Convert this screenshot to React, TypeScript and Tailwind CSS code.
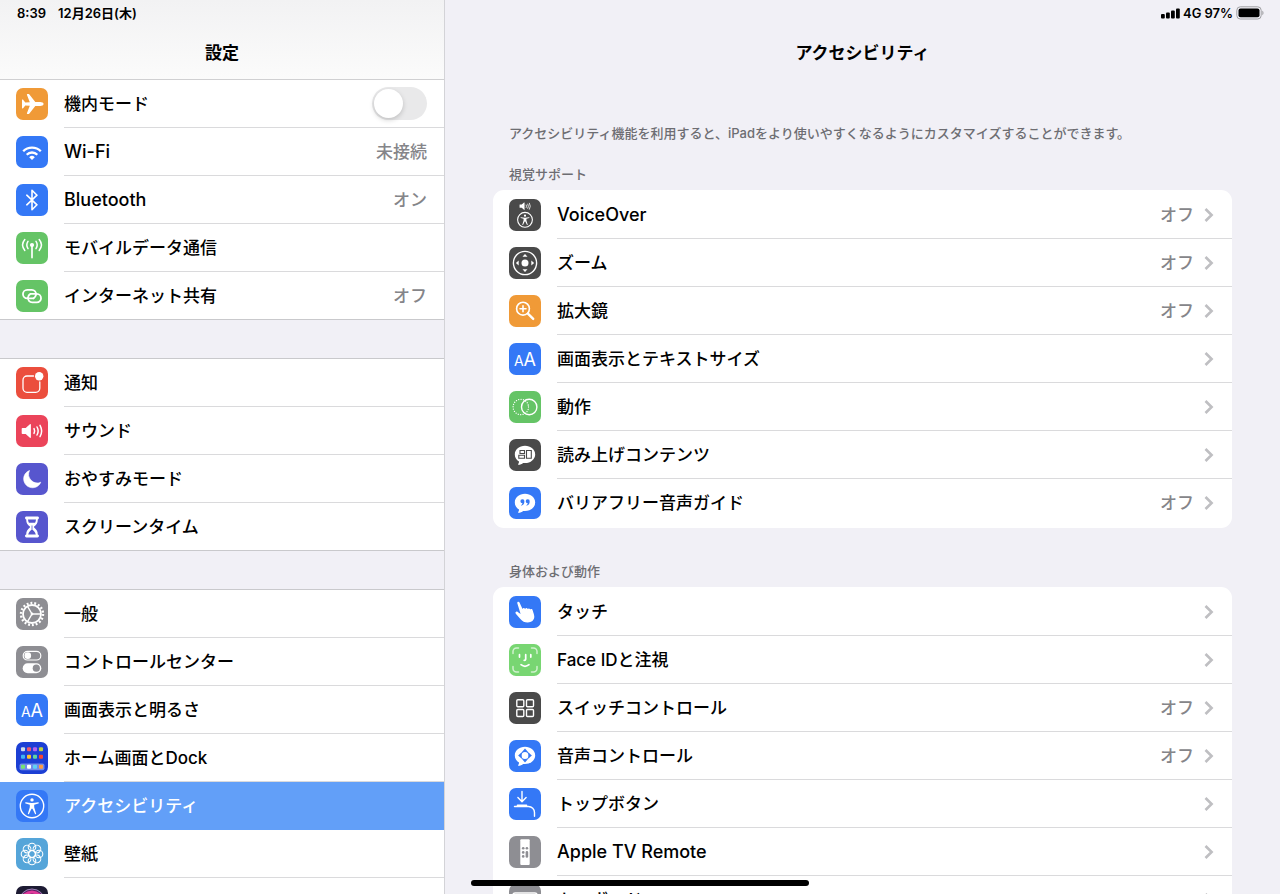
import React from 'react';
import clsx from 'clsx';

type IconName =
  | 'airplane' | 'wifi' | 'bluetooth' | 'antenna' | 'link'
  | 'notice' | 'sound' | 'moon' | 'hourglass'
  | 'gear' | 'controls' | 'textSize' | 'home' | 'person' | 'flower' | 'siri'
  | 'voiceOver' | 'zoom' | 'magnifier' | 'motion' | 'speech' | 'quote'
  | 'touch' | 'face' | 'grid' | 'voiceControl' | 'topButton' | 'remote' | 'keyboard';

interface Item {
  icon: IconName;
  bg: string;
  label: string;
  value?: string;
  toggle?: boolean;
  active?: boolean;
}

const ORANGE = 'bg-[#f09a37]';
const BLUE = 'bg-[#3478f6]';
const GREEN = 'bg-[#65c466]';
const INDIGO = 'bg-[#5756ce]';
const GRAY = 'bg-[#8e8e93]';
const DARK = 'bg-[#4a4a4a]';

const sidebarGroups: Item[][] = [
  [
    { icon: 'airplane', bg: ORANGE, label: '機内モード', toggle: true },
    { icon: 'wifi', bg: BLUE, label: 'Wi-Fi', value: '未接続' },
    { icon: 'bluetooth', bg: BLUE, label: 'Bluetooth', value: 'オン' },
    { icon: 'antenna', bg: GREEN, label: 'モバイルデータ通信' },
    { icon: 'link', bg: GREEN, label: 'インターネット共有', value: 'オフ' },
  ],
  [
    { icon: 'notice', bg: 'bg-[#eb4e3d]', label: '通知' },
    { icon: 'sound', bg: 'bg-[#eb445a]', label: 'サウンド' },
    { icon: 'moon', bg: INDIGO, label: 'おやすみモード' },
    { icon: 'hourglass', bg: INDIGO, label: 'スクリーンタイム' },
  ],
  [
    { icon: 'gear', bg: GRAY, label: '一般' },
    { icon: 'controls', bg: GRAY, label: 'コントロールセンター' },
    { icon: 'textSize', bg: BLUE, label: '画面表示と明るさ' },
    { icon: 'home', bg: 'bg-[#1c3fd4]', label: 'ホーム画面とDock' },
    { icon: 'person', bg: BLUE, label: 'アクセシビリティ', active: true },
    { icon: 'flower', bg: 'bg-[#55a5d9]', label: '壁紙' },
    { icon: 'siri', bg: 'bg-[#1d1b33]', label: 'Siri' },
  ],
];

const sections: { title: string; items: Item[] }[] = [
  {
    title: '視覚サポート',
    items: [
      { icon: 'voiceOver', bg: DARK, label: 'VoiceOver', value: 'オフ' },
      { icon: 'zoom', bg: DARK, label: 'ズーム', value: 'オフ' },
      { icon: 'magnifier', bg: ORANGE, label: '拡大鏡', value: 'オフ' },
      { icon: 'textSize', bg: BLUE, label: '画面表示とテキストサイズ' },
      { icon: 'motion', bg: GREEN, label: '動作' },
      { icon: 'speech', bg: DARK, label: '読み上げコンテンツ' },
      { icon: 'quote', bg: BLUE, label: 'バリアフリー音声ガイド', value: 'オフ' },
    ],
  },
  {
    title: '身体および動作',
    items: [
      { icon: 'touch', bg: BLUE, label: 'タッチ' },
      { icon: 'face', bg: 'bg-[#78d672]', label: 'Face IDと注視' },
      { icon: 'grid', bg: DARK, label: 'スイッチコントロール', value: 'オフ' },
      { icon: 'voiceControl', bg: BLUE, label: '音声コントロール', value: 'オフ' },
      { icon: 'topButton', bg: BLUE, label: 'トップボタン' },
      { icon: 'remote', bg: GRAY, label: 'Apple TV Remote' },
      { icon: 'keyboard', bg: GRAY, label: 'キーボード' },
    ],
  },
];

// Latin-only labels run a step larger to sit level with the kanji
const labelSize = (label: string) => (/^[\w\s-]+$/.test(label) ? 'text-[18px]' : 'text-[17px]');

const line = {
  fill: 'none',
  stroke: '#fff',
  strokeLinecap: 'round' as const,
  strokeLinejoin: 'round' as const,
};

const Bubble = () => (
  <path
    fill="#fff"
    d="M16 6.8c5.7 0 10.2 3.8 10.2 8.6S21.7 24 16 24c-.6 0-1.2 0-1.8-.1-1.3 1-3 1.900-4.700 1.900-.5 0-.6-.4-.3-.8.6-.7.9-1.600.8-2.500-2.500-1.500-4.200-4.100-4.200-7.100 0-4.800 4.500-8.600 10.200-8.600z"
  />
);

const Figure = () => (
  <g fill="#fff">
    <circle cx="16" cy="9.9" r="1.7" />
    <path d="M9.900 12.300c-.7-.2-1.100.9-.3 1.200l4.200 1.200v2.600l-1.900 6.100c-.2.900.9 1.200 1.200.4L15.500 18.800h1l2.400 5c.3.800 1.400.5 1.200-.4l-1.900-6.100v-2.600l4.200-1.200c.8-.3.400-1.400-.3-1.200-4.100 1-8.100 1-12.200 0z" />
  </g>
);

const Waves = () => (
  <g {...line} strokeWidth="1.5">
    <path d="M18 13.600q1.300 2.400 0 4.800" />
    <path d="M21 12q2.300 4 0 8" />
    <path d="M24 10.400q3.300 5.600 0 11.200" />
  </g>
);

const Speaker = () => (
  <path fill="#fff" d="M6.500 13h3.200l4.200-3.700c.4-.4 1-.1 1 .4v12.600c0 .5-.6.8-1 .4L9.700 19H6.500c-.5 0-.8-.3-.8-.8v-4.400c0-.5.3-.8.8-.8z" />
);

const glyphs: Record<IconName, React.ReactNode> = {
  airplane: (
    <path
      fill="#fff"
      d="M27.600 16c0-1.200-1.700-1.900-3.400-1.900h-4.900l-5.900-7.500c-.3-.4-.6-.5-1-.5h-1c-.4 0-.6.400-.5.700l2.900 7.400-4.500.2-2-2.500c-.2-.2-.3-.3-.6-.3h-.3c-.3 0-.4.300-.4.500v7.800c0 .2.100.5.400.5h.3c.3 0 .4-.1.600-.3l2-2.500 4.500.2-2.900 7.400c-.1.300.1.700.5.700h1c.4 0 .7-.1 1-.5l5.900-7.500h4.900c1.700 0 3.400-.7 3.400-1.900z"
    />
  ),
  wifi: (
    <g {...line} strokeWidth="2.3" strokeLinecap="butt">
      <path d="M7.200 15.200a12.400 12.400 0 0 1 17.600 0" />
      <path d="M10.700 18.700a7.500 7.500 0 0 1 10.600 0" />
      <path d="M13.200 21.200a4 4 0 0 1 5.600 0L16 24z" fill="#fff" stroke="none" />
    </g>
  ),
  bluetooth: <path {...line} strokeWidth="1.6" d="M10.800 11.200l10.200 9.600-5 4.900V6.300l5 4.900-10.200 9.600" />,
  antenna: (
    <g {...line} strokeWidth="1.5">
      <circle cx="16" cy="13" r="2.1" fill="#fff" stroke="none" />
      <path d="M16 14v11.600" strokeWidth="1.7" />
      <path d="M12 9.400q-2.400 3.600 0 7.200M20 9.400q2.400 3.600 0 7.200" />
      <path d="M8.800 7.600q-4.500 5.400 0 10.800M23.200 7.600q4.500 5.400 0 10.800" />
    </g>
  ),
  link: (
    <g {...line} strokeWidth="1.8">
      <path d="M17.600 18.300h-6.400a4.250 4.250 0 0 1 0-8.500h4.600a4.250 4.250 0 0 1 4.200 4.900" />
      <path d="M14.400 13.900h6.400a4.250 4.250 0 0 1 0 8.500h-4.600a4.250 4.250 0 0 1-4.200-4.900q.3-2.500 2.400-3.600" />
      <path d="M20 14.700q-.4 2.600-2.400 3.600" />
    </g>
  ),
  notice: (
    <g>
      <path {...line} strokeWidth="1.3" d="M17.500 9h-6.500a4 4 0 0 0-4 4v8.300a4 4 0 0 0 4 4h8.800a4 4 0 0 0 4-4V15" />
      <circle cx="23.200" cy="9.200" r="4.200" fill="#fff" />
    </g>
  ),
  sound: <g><Speaker /><Waves /></g>,
  moon: (
    <path
      fill="#fff"
      stroke="#fff"
      strokeWidth=".6"
      strokeLinejoin="round"
      d="M13.500 7.500A8.900 8.900 0 1 0 24.800 19.200A8.700 8.700 0 0 1 13.500 7.500z"
    />
  ),
  hourglass: (
    <g>
      <path
        fill="#fff"
        d="M10.500 5.500h11c1.900 0 1.900 2.600.3 2.900 0 3.700-1.300 5.200-3.700 7.200v.8c2.400 2 3.700 3.500 3.700 7.200 1.600.3 1.600 2.900-.3 2.900h-11c-1.900 0-1.900-2.600-.3-2.900 0-3.700 1.300-5.200 3.700-7.200v-.8c-2.400-2-3.700-3.500-3.700-7.200-1.600-.3-1.600-2.900.3-2.900z"
      />
      <path fill="#5756ce" d="M12 8.600h8c-.1 1.300-.4 2.300-.9 3.100h-6.200c-.5-.8-.8-1.800-.9-3.100zM15.600 14.500h.8v4.200c1.300.8 2.700 2 3.400 4.900h-7.600c.7-2.900 2.100-4.100 3.400-4.900z" />
    </g>
  ),
  gear: (
    <g {...line} strokeLinecap="butt">
      <circle cx="16" cy="16" r="9" strokeWidth="1.8" />
      <circle cx="16" cy="16" r="11" strokeWidth="2.4" strokeDasharray="1.9 1.94" />
      <path strokeWidth="1.4" d="M16 16h8.500M16 16l-4.300-7.400M16 16l-4.300 7.400" />
      <circle cx="16" cy="16" r="1.4" fill="#fff" stroke="none" />
    </g>
  ),
  controls: (
    <g>
      <rect x="7.200" y="5.300" width="17.600" height="8.700" rx="4.350" {...line} strokeWidth="1.2" />
      <circle cx="11.800" cy="9.650" r="3.300" fill="#fff" />
      <rect x="6.700" y="17.200" width="18.600" height="10" rx="5" fill="#fff" />
      <circle cx="20.300" cy="22.200" r="3.600" fill="#8e8e93" />
    </g>
  ),
  textSize: (
    <g fill="#fff" fontFamily="Inter, sans-serif" fontWeight="400">
      <text x="5" y="22.500" fontSize="14">A</text>
      <text x="14.500" y="22.500" fontSize="18">A</text>
    </g>
  ),
  home: (
    <g>
      <rect x="3.500" y="21.500" width="25" height="6.700" rx="2" fill="#8fa6f2" opacity=".75" />
      {[
        ['#cfdcea', '#ee566b', '#b562ee', '#bcd23f'],
        ['#3eb5f1', '#ffc12e', '#5ed6a0', '#fb4330'],
        ['#74e374', '#ffffff', '#5ed2f4', '#ff9d42'],
      ].map((row, r) =>
        row.map((color, c) => (
          <rect key={`${r}-${c}`} x={5 + c * 6} y={[5.2, 12.8, 22.8][r]} width="4" height="4" rx="1" fill={color} />
        ))
      )}
    </g>
  ),
  person: (
    <g>
      <circle cx="16" cy="16" r="11.700" {...line} strokeWidth="1.4" />
      <Figure />
    </g>
  ),
  flower: (
    <g {...line} strokeWidth="1.1">
      {[0, 45, 90, 135, 180, 225, 270, 315].map((deg) => (
        <circle key={deg} cx="16" cy="9" r="3.800" transform={`rotate(${deg} 16 16)`} />
      ))}
      <circle cx="16" cy="16" r="3.500" />
    </g>
  ),
  siri: (
    <g fill="none">
      <circle cx="16" cy="16" r="13" fill="#5b1f63" />
      <circle cx="16" cy="16" r="13" stroke="#9a86b8" strokeWidth="1" />
      <path d="M6 11q10-10 20 0" stroke="#e0399b" strokeWidth="3" />
    </g>
  ),
  voiceOver: (
    <g>
      <g transform="translate(7.5 -1.4) scale(.54)"><Speaker /><Waves /></g>
      <circle cx="16" cy="20.800" r="7.400" {...line} strokeWidth="1.1" />
      <g transform="translate(5.6 10.2) scale(.65)"><Figure /></g>
    </g>
  ),
  zoom: (
    <g fill="#fff">
      <circle cx="16" cy="16" r="11.600" {...line} strokeWidth="1.4" />
      <circle cx="16" cy="16" r="3.500" />
      {[0, 90, 180, 270].map((deg) => (
        <path key={deg} d="M16 6.900l2.500 2.800h-5z" transform={`rotate(${deg} 16 16)`} />
      ))}
    </g>
  ),
  magnifier: (
    <g {...line} strokeWidth="1.6">
      <circle cx="14" cy="13.700" r="6.400" />
      <path d="M14 10.700v6M11 13.700h6" />
      <path d="M18.900 18.700l5.300 5.200" strokeWidth="2.400" />
    </g>
  ),
  motion: (
    <g {...line}>
      <circle cx="11.800" cy="16" r="7.700" strokeWidth="1.3" strokeDasharray="0.1 2.320" />
      <circle cx="20.200" cy="16" r="7.700" strokeWidth="1.4" />
    </g>
  ),
  speech: (
    <g>
      <Bubble />
      <path
        fill="none"
        stroke="#4a4a4a"
        strokeWidth="1.1"
        d="M11 11.500h4.500v3H11zM9.800 16.300h5.700v3H9.800zM17.500 11.500h4.800v7.800h-4.800z"
      />
    </g>
  ),
  quote: (
    <g>
      <Bubble />
      <g fill="#3478f6">
        <path d="M13.300 12.200a2 2 0 0 1 2.100 2.200c0 2.100-1.100 3.600-2.700 4.200-.5.200-.8-.3-.4-.6.700-.5 1.100-1.100 1.200-1.800a2 2 0 1 1-.2-4z" />
        <path d="M18.600 12.200a2 2 0 0 1 2.100 2.200c0 2.100-1.100 3.600-2.700 4.200-.5.200-.8-.3-.4-.6.700-.5 1.100-1.100 1.200-1.800a2 2 0 1 1-.2-4z" />
      </g>
    </g>
  ),
  touch: (
    <path
      fill="#fff"
      d="M8.300 7.300c-.4-1.500 1.600-2.100 2.200-.7l3 6.500c.3-1.400 2.100-1.300 2.600-.2.600-1.200 2.100-1.100 2.600.1.700-1 2.100-.7 2.500.5.900-.9 2.200-.4 2.500.9.500 1.900 1.600 4.100 1.600 6.400 0 3.500-3 5.800-6.700 5.700-3 0-5.200-1.400-7.200-3.600l-4.600-5.200c-1.100-1.300.5-2.800 1.900-1.800l2.900 2.100z"
    />
  ),
  face: (
    <g {...line} strokeWidth="1.5">
      <path opacity=".65" d="M4 9.500V7.500A3.500 3.500 0 0 1 7.500 4h2M22.500 4h2A3.500 3.500 0 0 1 28 7.500v2M28 22.500v2a3.500 3.500 0 0 1-3.500 3.500h-2M9.500 28h-2A3.500 3.500 0 0 1 4 24.500v-2" />
      <path d="M10.500 10.700v2.400M21.800 10.700v2.400M16.700 10.700v4.600q0 1-1.500 1M12 20.700q4 3.200 8 0" strokeWidth="1.7" />
    </g>
  ),
  grid: (
    <g {...line} strokeWidth="1.4">
      <rect x="7.800" y="7.800" width="7" height="7" rx="1" />
      <rect x="17.500" y="7.800" width="7" height="7" rx="1" />
      <rect x="7.800" y="17.500" width="7" height="7" rx="1" />
      <rect x="17.500" y="17.500" width="7" height="7" rx="1" />
    </g>
  ),
  voiceControl: (
    <g>
      <Bubble />
      <g fill="#3478f6">
        <circle cx="16" cy="15.500" r="4.100" fill="none" stroke="#3478f6" strokeWidth="1.2" />
        {[0, 90, 180, 270].map((deg) => (
          <path key={deg} d="M16 8.600l2.800 3.200h-5.600z" transform={`rotate(${deg} 16 15.5)`} />
        ))}
      </g>
    </g>
  ),
  topButton: (
    <g {...line} strokeWidth="1.4">
      <path d="M13 3.500v10M8.900 9.600L13 13.700l4.100-4.100" />
      <path d="M5.500 18.500h14a6 6 0 0 1 6 6v3.800" />
      <path d="M8.500 17.400h9" strokeWidth="1.6" />
    </g>
  ),
  remote: (
    <g fill="#8e8e93">
      <rect x="11.300" y="3.300" width="9.400" height="25.600" rx="1" fill="#fff" />
      <circle cx="14.200" cy="12.300" r="1.300" />
      <circle cx="17.900" cy="12.300" r="1.300" />
      <circle cx="14.200" cy="16.400" r="1.300" />
      <circle cx="14.200" cy="20.400" r="1.300" />
      <rect x="16.600" y="15.100" width="2.600" height="6.600" rx="1.300" />
    </g>
  ),
  keyboard: <rect x="4" y="9" width="24" height="14" rx="2" {...line} strokeWidth="1.5" />,
};

const Icon: React.FC<{ name: IconName; bg: string }> = ({ name, bg }) => (
  <span className={clsx('block size-8 shrink-0 self-center overflow-hidden rounded-[7px]', bg)}>
    <svg viewBox="0 0 32 32" className="size-8" aria-hidden="true">{glyphs[name]}</svg>
  </span>
);

const Toggle: React.FC<{ id: string }> = ({ id }) => (
  <input
    id={id}
    type="checkbox"
    role="switch"
    className="h-[33px] w-[55px] cursor-pointer appearance-none rounded-full bg-[#e9e9ea] p-[2px] before:block before:size-[29px] before:rounded-full before:bg-white before:shadow-[0_2px_5px_rgba(0,0,0,0.18)] checked:bg-[#65c466] checked:before:translate-x-[22px]"
  />
);

const SidebarRow: React.FC<{ item: Item; last: boolean }> = ({ item, last }) => {
  const rowClass = clsx(
    'flex h-12 gap-4 pl-4',
    item.active && 'bg-[#629ff8] text-white',
    last && 'border-b border-[#c9c9cc]'
  );
  const bodyClass = clsx(
    'flex flex-1 items-center justify-between pr-[17px]',
    !last && 'border-b',
    item.active ? 'border-[#629ff8]' : 'border-[#dadadc]'
  );

  if (item.toggle) {
    return (
      <div className={rowClass}>
        <Icon name={item.icon} bg={item.bg} />
        <div className={bodyClass}>
          <label htmlFor={item.icon}>{item.label}</label>
          <Toggle id={item.icon} />
        </div>
      </div>
    );
  }

  return (
    <a href={`#${item.icon}`} className={rowClass} aria-current={item.active ? 'page' : undefined}>
      <Icon name={item.icon} bg={item.bg} />
      <span className={bodyClass}>
        <span className={labelSize(item.label)}>{item.label}</span>
        {item.value && <span className="text-[#858589]">{item.value}</span>}
      </span>
    </a>
  );
};

const DetailRow: React.FC<{ item: Item; last: boolean }> = ({ item, last }) => (
  <a href={`#${item.icon}`} className="flex h-12 gap-4 pl-4">
    <Icon name={item.icon} bg={item.bg} />
    <span className={clsx('flex flex-1 items-center gap-[10px] pr-[18px]', !last && 'border-b border-[#dadadc]')}>
      <span className={clsx('flex-1', labelSize(item.label))}>{item.label}</span>
      {item.value && <span className="text-[#858589]">{item.value}</span>}
      <svg viewBox="0 0 10 14" className="h-[14px] w-[10px]" aria-hidden="true">
        <path d="M1.500 1L7.600 7l-6.100 6" fill="none" stroke="#bfbfc2" strokeWidth="2.600" strokeLinejoin="miter" />
      </svg>
    </span>
  </a>
);

const App: React.FC = () => {
  return (
    <div
      lang="ja"
      className="relative flex h-screen overflow-hidden bg-[#f1f0f6] font-['Inter','Noto_Sans_CJK_JP',sans-serif] text-[17px] leading-6 font-medium text-black"
    >
      {/* Sidebar */}
      <aside className="flex w-[445px] shrink-0 flex-col border-r border-[#d3d3d7]">
        <header className="h-20 shrink-0 border-b border-[#d0d0d2] bg-linear-to-b from-[#f2f2f3] to-[#fbfbfb]">
          <div className="flex h-[26px] items-center gap-3 pl-[17px] text-[13px] font-semibold">
            <span>8:39</span>
            <span>12月26日(木)</span>
          </div>
          <h2 className="flex h-[53px] items-center justify-center font-bold">設定</h2>
        </header>
        <nav className="flex-1 overflow-y-auto [scrollbar-width:none]" aria-label="設定">
          {sidebarGroups.map((group, g) => (
            <React.Fragment key={g}>
              {g > 0 && <div className="h-[39px] border-b border-[#c9c9cc]" />}
              <div className="bg-white">
                {group.map((item, i) => (
                  <SidebarRow key={item.label} item={item} last={i === group.length - 1} />
                ))}
              </div>
            </React.Fragment>
          ))}
        </nav>
      </aside>

      {/* Detail pane */}
      <main className="flex min-w-0 flex-1 flex-col">
        <header className="h-20 shrink-0">
          <div className="flex h-[26px] items-center justify-end gap-[3px] pr-4 text-[13px] font-semibold">
            <svg viewBox="0 0 19 11" className="h-[11px] w-[19px]" aria-hidden="true">
              <rect x="0" y="6" width="3.800" height="4.500" rx="1" />
              <rect x="5" y="4.500" width="3.800" height="6" rx="1" />
              <rect x="10" y="2.500" width="3.800" height="8" rx="1" />
              <rect x="15" y="0.500" width="3.800" height="10" rx="1" />
            </svg>
            <span>4G</span>
            <span>97%</span>
            <svg viewBox="0 0 28 14" className="h-[14px] w-7" aria-hidden="true">
              <rect x="0.800" y="0.800" width="24.400" height="12.200" rx="3.500" fill="none" stroke="#a0a0a4" strokeWidth="1" />
              <rect x="2.500" y="2.500" width="21" height="8.800" rx="2" />
              <path d="M26.300 4.800c1.600.6 1.600 3.800 0 4.400z" fill="#a0a0a4" />
            </svg>
          </div>
          <h1 className="flex h-[53px] items-center justify-center font-bold">アクセシビリティ</h1>
        </header>

        <div className="flex-1 overflow-y-auto px-12 pt-[43px] [scrollbar-width:none]">
          <p className="px-4 text-[13px] leading-5 text-[#6d6d72]">
            アクセシビリティ機能を利用すると、iPadをより使いやすくなるようにカスタマイズすることができます。
          </p>
          {sections.map((section, s) => (
            <section key={section.title} className={s === 0 ? 'pt-[21px]' : 'pt-[33px]'}>
              <h3 className="px-4 pb-[6px] text-[13px] leading-5 text-[#6d6d72]">{section.title}</h3>
              <div className="overflow-hidden rounded-[11px] bg-white py-px">
                {section.items.map((item, i) => (
                  <DetailRow key={item.label} item={item} last={i === section.items.length - 1} />
                ))}
              </div>
            </section>
          ))}
        </div>
      </main>

      {/* Home indicator, floats over both panes */}
      <div className="absolute bottom-2 left-1/2 h-[6px] w-[338px] -translate-x-1/2 rounded-full bg-black" />
    </div>
  );
};

export default App;
